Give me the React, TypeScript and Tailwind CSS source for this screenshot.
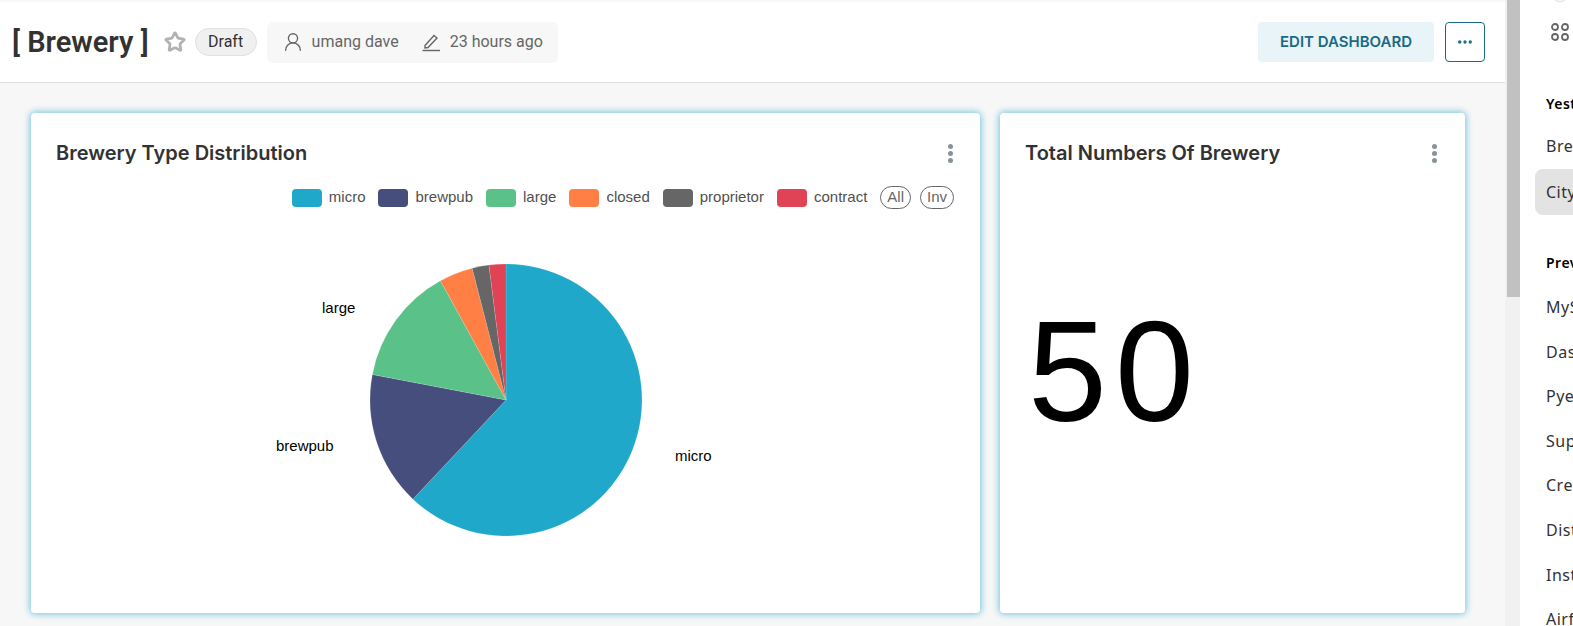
import React from "react";
import { Star, UserRound, MoreHorizontal } from "lucide-react";

const SLICES = [
  { name: "micro", count: 31, color: "#1fa8c9" },
  { name: "brewpub", count: 8, color: "#454e7c" },
  { name: "large", count: 7, color: "#5ac189" },
  { name: "closed", count: 2, color: "#ff7f44" },
  { name: "proprietor", count: 1, color: "#666666" },
  { name: "contract", count: 1, color: "#e04355" },
];

const RECENT = ["MySQL", "Dashboards", "Pyenv", "Superset", "Create", "Distributed", "Install", "Airflow"];

const PieChart = () => {
  const cx = 475;
  const cy = 191;
  const r = 136;
  let acc = 0;
  const paths = SLICES.map((s) => {
    const a0 = (acc / 50) * Math.PI * 2;
    acc += s.count;
    const a1 = (acc / 50) * Math.PI * 2;
    const large = a1 - a0 > Math.PI ? 1 : 0;
    const d = `M${cx} ${cy}L${cx + r * Math.sin(a0)} ${cy - r * Math.cos(a0)}A${r} ${r} 0 ${large} 1 ${cx + r * Math.sin(a1)} ${cy - r * Math.cos(a1)}Z`;
    return <path key={s.name} d={d} fill={s.color} stroke="#ffffff" strokeOpacity={0.25} strokeWidth={0.5} />;
  });
  return (
    <svg width="949" height="400" className="block">
      {paths}
      <g fontFamily="'Liberation Sans', sans-serif" fontSize="15" fill="#000000">
        <text x="644" y="252">micro</text>
        <text x="245" y="242">brewpub</text>
        <text x="291" y="104">large</text>
      </g>
    </svg>
  );
};

const Kebab = () => (
  <div className="flex flex-col gap-[2px] items-center mt-[5px]">
    <span className="w-[5px] h-[5px] rounded-full bg-[#879399]" />
    <span className="w-[5px] h-[5px] rounded-full bg-[#879399]" />
    <span className="w-[5px] h-[5px] rounded-full bg-[#879399]" />
  </div>
);

export default function App() {
  return (
    <div className="flex w-[1573px] h-[626px] overflow-hidden bg-white font-['Inter',sans-serif]">
      <div className="w-[1505px] h-full flex flex-col bg-[#f7f7f7] pt-[2px]">
        <header className="h-[81px] shrink-0 bg-white border-b border-[#e0e0e0] flex items-center pl-3 pr-[20px]">
          <h1 className="text-[29px] leading-none font-semibold text-[#323232] font-['Roboto',sans-serif]">[ Brewery ]</h1>
          <Star size={22} strokeWidth={3} className="ml-[15px] text-[#b2b2b2]" />
          <span className="ml-[9px] h-[28px] w-[62px] justify-center flex items-center rounded-full bg-[#f0f0f0] border border-[#e0e0e0] text-base text-[#323232] font-['Roboto',sans-serif]">
            Draft
          </span>
          <div className="ml-[10px] h-[41px] w-[291px] rounded-md bg-[#f7f7f7] flex items-center pl-[15px] text-base text-[#666666] font-['Roboto',sans-serif]">
            <UserRound size={22} strokeWidth={1.5} />
            <span className="ml-[8px]">umang dave</span>
            <svg width="20" height="20" viewBox="0 0 20 20" fill="none" stroke="currentColor" strokeWidth="1.4" className="ml-[22px]">
              <path d="M4 13.5 L13 3.5 L16 6 L7 15.5 L4 16 Z" />
              <path d="M1.5 18.5 H19" />
            </svg>
            <span className="ml-[9px]">23 hours ago</span>
          </div>
          <button className="ml-auto w-[176px] h-10 rounded bg-[#e8f4f8] text-[#1a6a85] text-[15px] font-semibold">
            EDIT DASHBOARD
          </button>
          <button className="ml-[11px] w-10 h-10 rounded border border-[#1a6a85] bg-white text-[#1a6a85] flex items-center justify-center">
            <MoreHorizontal size={18} strokeWidth={2.5} />
          </button>
        </header>

        <div className="flex gap-[20px] pl-[31px] pt-[30px]">
          <section className="w-[949px] h-[500px] bg-white rounded shadow-[0_0_7px_1px_#6fc3dc] flex flex-col">
            <div className="flex items-start justify-between h-[73px] pt-[26px] pl-[25px] pr-[27px]">
              <h2 className="text-xl leading-7 font-semibold text-[#323232]">Brewery Type Distribution</h2>
              <Kebab />
            </div>
            <div className="flex items-center justify-end gap-[13px] pr-[26px] text-[15px] text-[#505050] font-['Liberation_Sans',sans-serif]">
              {SLICES.map((s) => (
                <span key={s.name} className="flex items-center gap-[7px]">
                  <span className="w-[30px] h-[18px] rounded" style={{ backgroundColor: s.color }} />
                  {s.name}
                </span>
              ))}
              <span className="h-[23px] px-[6px] flex items-center rounded-full border border-[#666666] text-[#666666]">All</span>
              <span className="-ml-[4px] h-[23px] px-[6px] flex items-center rounded-full border border-[#666666] text-[#666666]">Inv</span>
            </div>
            <PieChart />
          </section>

          <section className="w-[465px] h-[500px] bg-white rounded shadow-[0_0_7px_1px_#6fc3dc] flex flex-col">
            <div className="flex items-start justify-between h-[73px] pt-[26px] pl-[25px] pr-[28px]">
              <h2 className="text-xl leading-7 font-semibold text-[#323232]">Total Numbers Of Brewery</h2>
              <Kebab />
            </div>
            <div className="pl-[28px] pt-[115px] text-[142px] tracking-[8px] leading-none text-black font-['Liberation_Sans',sans-serif]">50</div>
          </section>
        </div>
      </div>

      <div className="w-[15px] h-full bg-[#f1f1f1] pl-[2px]">
        <div className="w-[13px] h-[297px] bg-[#c1c1c1]" />
      </div>

      <aside className="flex-1 min-w-0 overflow-hidden bg-white pl-[15px] text-base tracking-[0.5px] text-[#323232] font-['Noto_Sans',sans-serif]">
        <div className="w-[18px] h-[18px] ml-[16px] -mt-[16px] rounded-full border border-[#dddddd]" />
        <div className="h-[41px] flex items-end">
          <svg width="18" height="18" viewBox="0 0 18 18" fill="none" stroke="#666666" strokeWidth="1.8" className="ml-[16px] mb-[2px]">
            <circle cx="4" cy="4" r="3" />
            <circle cx="14" cy="4" r="3" />
            <circle cx="4" cy="14" r="3" />
            <circle cx="14" cy="14" r="3" />
          </svg>
        </div>
        <div className="mt-[51px] pl-[11px] text-sm font-semibold text-black whitespace-nowrap">Yesterday</div>
        <div className="mt-[21px] pl-[11px] h-[22px] leading-[22px] whitespace-nowrap">Brewery</div>
        <div className="mt-[12px] h-[46px] rounded-l-lg bg-[#e3e3e3] pl-[11px] leading-[46px] whitespace-nowrap">City</div>
        <div className="mt-[38px] pl-[11px] text-sm font-semibold text-black whitespace-nowrap">Previous</div>
        <div className="mt-[12px] pl-[11px] flex flex-col">
          {RECENT.map((t) => (
            <div key={t} className="h-[44.6px] leading-[44.6px] whitespace-nowrap">{t}</div>
          ))}
        </div>
      </aside>
    </div>
  );
}
